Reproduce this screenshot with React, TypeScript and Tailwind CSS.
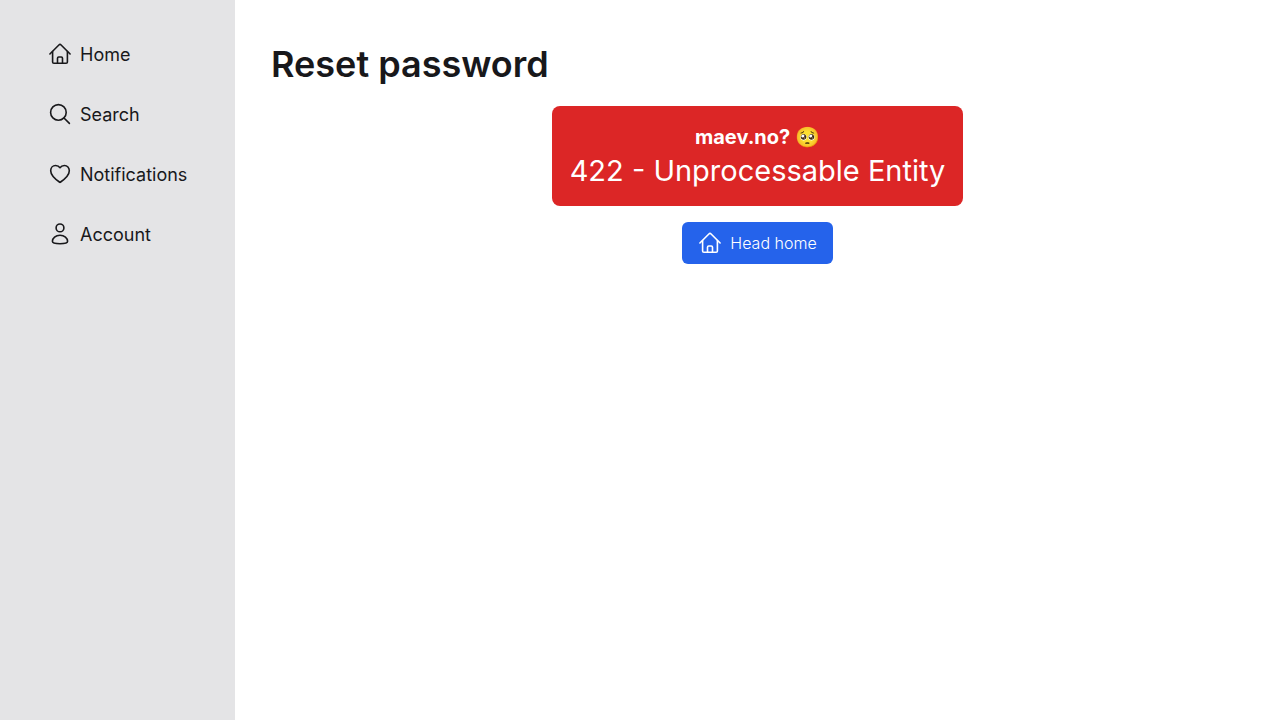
import type { ReactNode } from "react";

function Icon({ children }: { children: ReactNode }) {
  return (
    <svg
      viewBox="0 0 24 24"
      className="size-6 shrink-0"
      fill="none"
      stroke="currentColor"
      strokeWidth="1.6"
      strokeLinecap="round"
      strokeLinejoin="round"
      aria-hidden="true"
    >
      {children}
    </svg>
  );
}

function HomeIcon() {
  return (
    <Icon>
      <path d="M1.9 12 10.9 3Q12 1.9 13.1 3L22.1 12" />
      <path d="M4.6 9.6V19.9Q4.6 21.2 5.9 21.2H18.1Q19.4 21.2 19.4 19.9V9.6" />
      <path d="M9.5 21V16.2Q9.5 15 10.7 15H13.3Q14.5 15 14.5 16.2V21" />
    </Icon>
  );
}

function SearchIcon() {
  return (
    <Icon>
      <circle cx="10.4" cy="10.4" r="7.8" />
      <path d="M16 16 21.400 21.400" />
    </Icon>
  );
}

function HeartIcon() {
  return (
    <Icon>
      <path d="M12 5.7C10.9 4.1 9.3 3.5 7.6 3.5 4.7 3.5 2.7 5.9 2.7 8.7 2.7 14.2 9.2 18.4 12 20.4 14.8 18.4 21.3 14.2 21.3 8.7 21.3 5.9 19.3 3.5 16.4 3.5 14.7 3.5 13.1 4.1 12 5.7Z" />
    </Icon>
  );
}

function UserIcon() {
  return (
    <Icon>
      <circle cx="12" cy="5.9" r="3.9" />
      <path d="M4.4 19.3C4.4 16 7.6 13.2 12 13.2S19.6 16 19.6 19.3C19.6 20.8 16.5 21.7 12 21.7S4.4 20.8 4.4 19.3Z" />
    </Icon>
  );
}

const links = [
  { label: "Home", href: "#home", icon: <HomeIcon /> },
  { label: "Search", href: "#search", icon: <SearchIcon /> },
  { label: "Notifications", href: "#notifications", icon: <HeartIcon /> },
  { label: "Account", href: "#account", icon: <UserIcon /> },
];

export default function App() {
  return (
    <div className="flex min-h-screen bg-white font-['Inter',sans-serif] text-[#18181b]">
      <nav className="w-[235px] shrink-0 bg-[#e4e4e6] p-9">
        <ul className="flex flex-col gap-6">
          {links.map((link) => (
            <li key={link.label}>
              <a href={link.href} className="flex h-9 items-center gap-2 px-3 text-lg">
                {link.icon}
                <span className="pt-0.5">{link.label}</span>
              </a>
            </li>
          ))}
        </ul>
      </nav>
      <main className="min-w-0 grow px-9 pt-11">
        <h1 className="text-4xl font-semibold">Reset password</h1>
        <div className="flex flex-col items-center gap-4 pt-[22px]">
          <div className="rounded-lg bg-[#dc2626] px-[18px] py-4 text-center text-white">
            <h2 className="text-xl leading-[30px] font-bold">maev.no? 🥺</h2>
            <p className="text-[29px] leading-[38px]">422 - Unprocessable Entity</p>
          </div>
          <a
            href="#home"
            className="flex h-[42px] items-center gap-2 rounded-md bg-[#2563eb] px-4 text-base font-light text-white"
          >
            <HomeIcon />
            Head home
          </a>
        </div>
      </main>
    </div>
  );
}
